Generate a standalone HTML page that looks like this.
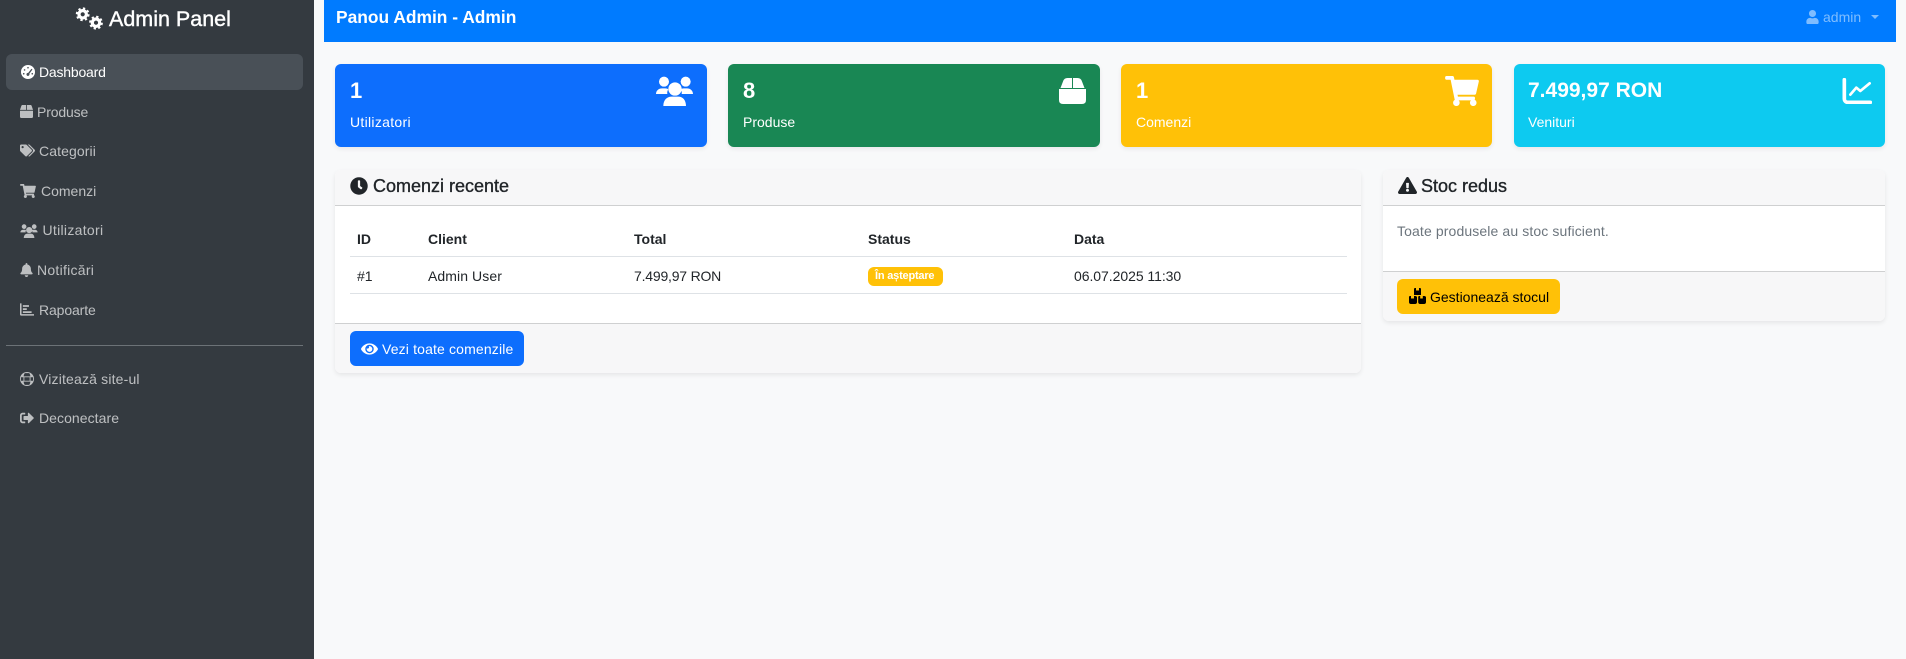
<!DOCTYPE html>
<html lang="ro">
<head>
<meta charset="utf-8">
<title>Admin Panel</title>
<style>
html,body{margin:0;padding:0;width:1906px;height:659px;overflow:hidden;background:#f8f9fa;font-family:"Liberation Sans",sans-serif;color:#212529}
.a{position:absolute}
.t{position:absolute;white-space:nowrap;line-height:20px;font-size:14px}
svg{position:absolute;display:block;fill:currentColor}
#side{left:0;top:0;width:314px;height:659px;background:#343a40}
.n{color:rgba(255,255,255,.68)}
.ni{color:rgba(255,255,255,.68)}
.card{position:absolute;border-radius:6px;background:#fff;box-shadow:0 2px 5px rgba(0,0,0,.08);overflow:hidden}
.st{position:absolute;top:64px;height:83px;border-radius:6px;box-shadow:0 2px 5px rgba(0,0,0,.07)}
.w{color:#fff}
.big{font-size:23px;font-weight:bold;line-height:28px;color:#fff}
.head{font-size:18px;-webkit-text-stroke:.35px currentColor}
.th{font-weight:bold;font-size:14px}
</style>
</head>
<body>
<div id="side" class="a"></div>
<svg style="left:73px;top:5px;width:32px;height:27px" viewBox="0 0 32 27"><g fill="none" stroke="#fff"><circle cx="9.7" cy="9.3" r="3.7" stroke-width="3.2"/><circle cx="9.7" cy="9.3" r="5.9" stroke-width="2" stroke-dasharray="2.3 2.33"/><circle cx="23" cy="17.7" r="3.7" stroke-width="3.2"/><circle cx="23" cy="17.7" r="5.9" stroke-width="2" stroke-dasharray="2.3 2.33"/></g></svg>
<div class="t" style="left:109px;top:9px;font-size:21.5px;color:#fff;-webkit-text-stroke:.4px #fff">Admin Panel</div>

<div class="a" style="left:6px;top:54px;width:297px;height:36px;background:#495057;border-radius:6px"></div>
<svg style="left:20.5px;top:65px;width:14px;height:14px;color:#fff" viewBox="0 0 512 512"><path fill-rule="evenodd" d="M256 0a256 256 0 1 0 0 512A256 256 0 1 0 256 0zM256 70a30 30 0 1 1 0 60 30 30 0 0 1 0-60zM130 150a30 30 0 1 1 0 60 30 30 0 0 1 0-60zM100 290a30 30 0 1 1 0 60 30 30 0 0 1 0-60zM412 290a30 30 0 1 1 0 60 30 30 0 0 1 0-60zM383 139l36 26-114 154a56 56 0 1 1-40-30z"/></svg>
<div class="t" style="left:39px;top:62px;color:#fff;letter-spacing:-.2px">Dashboard</div>

<svg class="ni" style="left:20px;top:105px;width:13px;height:13px" viewBox="0 0 512 512"><path d="M509.5 184.6L458.9 32.8C452.4 13.2 434.1 0 413.4 0H272v192h238.7c-.4-2.5-.4-5-1.2-7.4zM240 0H98.6c-20.7 0-39 13.2-45.5 32.8L2.5 184.6c-.8 2.4-.8 4.9-1.2 7.4H240V0zM0 224v240c0 26.5 21.5 48 48 48h416c26.5 0 48-21.5 48-48V224H0z"/></svg>
<div class="t n" style="left:37px;top:102px;letter-spacing:-.15px">Produse</div>

<svg class="ni" style="left:20px;top:144px;width:15px;height:13px" viewBox="0 0 640 512"><path d="M497.941 225.941L286.059 14.059A48 48 0 0 0 252.118 0H48C21.49 0 0 21.49 0 48v204.118a48 48 0 0 0 14.059 33.941l211.882 211.882c18.744 18.745 49.136 18.746 67.882 0l204.118-204.118c18.745-18.745 18.745-49.137 0-67.882zM112 160c-26.51 0-48-21.49-48-48s21.49-48 48-48 48 21.49 48 48-21.49 48-48 48zm513.941 133.823L421.823 497.941c-18.745 18.745-49.137 18.745-67.882 0l-.36-.36L527.64 323.522c16.999-16.999 26.36-39.6 26.36-63.64s-9.362-46.641-26.36-63.64L331.397 0h48.721a48 48 0 0 1 33.941 14.059l211.882 211.882c18.745 18.745 18.745 49.137 0 67.882z"/></svg>
<div class="t n" style="left:39px;top:141px;letter-spacing:.1px">Categorii</div>

<svg class="ni" style="left:20px;top:184px;width:16px;height:14px" viewBox="0 0 576 512"><path d="M528.12 301.319l47.273-208C578.806 78.301 567.391 64 551.99 64H159.208l-9.166-44.81C147.758 8.021 137.93 0 126.529 0H24C10.745 0 0 10.745 0 24v16c0 13.255 10.745 24 24 24h69.883l70.248 343.435C147.325 417.1 136 435.222 136 456c0 30.928 25.072 56 56 56s56-25.072 56-56c0-15.674-6.447-29.835-16.824-40h209.647C430.447 426.165 424 440.326 424 456c0 30.928 25.072 56 56 56s56-25.072 56-56c0-22.172-12.888-41.332-31.579-50.405l5.517-24.276c3.413-15.018-8.002-29.319-23.403-29.319H218.117l-6.545-32h293.145c11.206 0 20.92-7.754 23.403-18.681z"/></svg>
<div class="t n" style="left:41px;top:181px">Comenzi</div>

<svg class="ni" style="left:20px;top:224px;width:18px;height:14px" viewBox="1008 228 111 90"><circle cx="1032" cy="245" r="15"/><circle cx="1097" cy="245" r="15"/><circle cx="1065" cy="267" r="20"/><path d="M1030 318c0-18 11-28 25-28h20c13 0 23 10 23 28zM1008 282c0-10 8-17 18-17h10c4 0 7 1 9 3-3 4-4 9-3 14zM1119 282c0-10-8-17-18-17h-10c-4 0-7 1-9 3 3 4 4 9 3 14z"/></svg>
<div class="t n" style="left:42.5px;top:220px;letter-spacing:.3px">Utilizatori</div>

<svg class="ni" style="left:20px;top:263px;width:13px;height:14px" viewBox="0 0 448 512"><path d="M224 512c35.32 0 63.97-28.65 63.97-64H160.03c0 35.35 28.65 64 63.97 64zm215.39-149.71c-19.32-20.76-55.47-51.99-55.47-154.29 0-77.7-54.48-139.9-127.94-155.16V32c0-17.67-14.32-32-31.98-32s-31.98 14.33-31.98 32v20.84C118.56 68.1 64.08 130.3 64.08 208c0 102.3-36.15 133.53-55.47 154.29-6 6.45-8.66 14.16-8.61 21.71.11 16.4 12.98 32 32.1 32h383.8c19.12 0 32-15.6 32.1-32 .05-7.55-2.61-15.27-8.61-21.71z"/></svg>
<div class="t n" style="left:37px;top:260px;letter-spacing:.27px">Notificări</div>

<svg class="ni" style="left:20px;top:303px;width:14px;height:13px" viewBox="0 0 512 448"><path d="M56 0H0v400c0 26 22 48 48 48h464v-56H56zM104 64h224v64H104zM104 176h144v64H104zM104 288h320v64H104z"/></svg>
<div class="t n" style="left:39px;top:300px;letter-spacing:-.12px">Rapoarte</div>

<div class="a" style="left:6px;top:345px;width:297px;height:1px;background:#6c7277"></div>

<svg class="ni" style="left:20px;top:372px;width:14px;height:14px" viewBox="0 0 512 512"><path fill-rule="evenodd" d="M256 0a256 256 0 1 0 0 512A256 256 0 1 0 256 0zM176 40c-22 28-38 70-44 120h248c-6-50-22-92-44-120zM36 192c-3 20-3 108 0 128h92c-2-40-2-88 0-128zM160 192c-2 40-2 88 0 128h192c2-40 2-88 0-128zM384 192c2 40 2 88 0 128h92c3-20 3-108 0-128zM132 352c6 50 22 92 44 120h160c22-28 38-70 44-120z"/></svg>
<div class="t n" style="left:39px;top:369px;letter-spacing:.17px">Vizitează site-ul</div>

<svg class="ni" style="left:20px;top:411px;width:14px;height:14px" viewBox="0 0 512 512"><path d="M497 273L329 441c-15 15-41 4.5-41-17v-96H152c-13.3 0-24-10.7-24-24v-96c0-13.3 10.7-24 24-24h136V88c0-21.4 25.9-32 41-17l168 168c9.3 9.4 9.3 24.6 0 34zM192 436v-40c0-6.6-5.4-12-12-12H96c-17.7 0-32-14.3-32-32V160c0-17.7 14.3-32 32-32h84c6.6 0 12-5.4 12-12V76c0-6.6-5.4-12-12-12H96c-53 0-96 43-96 96v192c0 53 43 96 96 96h84c6.6 0 12-5.4 12-12z"/></svg>
<div class="t n" style="left:39px;top:408px;letter-spacing:.06px">Deconectare</div>

<div class="a" style="left:324px;top:0;width:1572px;height:42px;background:#007bff"></div>
<div class="t" style="left:336px;top:7px;font-size:17.4px;font-weight:bold;color:#fff">Panou Admin - Admin</div>
<svg style="left:1806px;top:10px;width:13px;height:14px;color:#7fbdff" viewBox="0 0 448 512"><path d="M224 256c70.7 0 128-57.3 128-128S294.7 0 224 0 96 57.3 96 128s57.3 128 128 128zm89.6 32h-16.7c-22.2 10.2-46.9 16-72.9 16s-50.6-5.8-72.9-16h-16.7C60.2 288 0 348.2 0 422.4V464c0 26.5 21.5 48 48 48h352c26.5 0 48-21.5 48-48v-41.6c0-74.2-60.2-134.4-134.4-134.4z"/></svg>
<div class="t" style="left:1823px;top:7px;color:#7fbdff">admin</div>
<div class="a" style="left:1871px;top:15px;width:0;height:0;border-top:4px solid #7fbdff;border-left:4px solid transparent;border-right:4px solid transparent"></div>

<div class="st" style="left:335px;width:372px;background:#0d6efd"></div>
<div class="t big" style="left:350px;top:77px;font-size:22px">1</div>
<div class="t w" style="left:350px;top:112px;letter-spacing:.3px">Utilizatori</div>
<svg class="w" style="left:656px;top:76px;width:37px;height:30px" viewBox="1008 228 111 90"><circle cx="1032" cy="245" r="15"/><circle cx="1097" cy="245" r="15"/><circle cx="1065" cy="267" r="20"/><path d="M1030 318c0-18 11-28 25-28h20c13 0 23 10 23 28zM1008 282c0-10 8-17 18-17h10c4 0 7 1 9 3-3 4-4 9-3 14zM1119 282c0-10-8-17-18-17h-10c-4 0-7 1-9 3 3 4 4 9 3 14z"/></svg>

<div class="st" style="left:728px;width:372px;background:#198754"></div>
<div class="t big" style="left:743px;top:77px;font-size:22px">8</div>
<div class="t w" style="left:743px;top:112px">Produse</div>
<svg class="w" style="left:1059px;top:78px;width:27px;height:26px" viewBox="0 0 27 26"><path d="M1.5 10 L4 3.5 Q5 0 8.5 0 H13 V10 Z M14 0 H18.5 Q22 0 23 3.5 L25.5 10 H14 Z M0 11 H27 V22 Q27 26 23 26 H4 Q0 26 0 22 Z"/></svg>

<div class="st" style="left:1121px;width:371px;background:#ffc107"></div>
<div class="t big" style="left:1136px;top:77px;font-size:22px">1</div>
<div class="t w" style="left:1136px;top:112px">Comenzi</div>
<svg class="w" style="left:1445px;top:76px;width:34px;height:30px" viewBox="0 0 576 512"><path d="M528.12 301.319l47.273-208C578.806 78.301 567.391 64 551.99 64H159.208l-9.166-44.81C147.758 8.021 137.93 0 126.529 0H24C10.745 0 0 10.745 0 24v16c0 13.255 10.745 24 24 24h69.883l70.248 343.435C147.325 417.1 136 435.222 136 456c0 30.928 25.072 56 56 56s56-25.072 56-56c0-15.674-6.447-29.835-16.824-40h209.647C430.447 426.165 424 440.326 424 456c0 30.928 25.072 56 56 56s56-25.072 56-56c0-22.172-12.888-41.332-31.579-50.405l5.517-24.276c3.413-15.018-8.002-29.319-23.403-29.319H218.117l-6.545-32h293.145c11.206 0 20.92-7.754 23.403-18.681z"/></svg>

<div class="st" style="left:1514px;width:371px;background:#0dcaf0"></div>
<div class="t big" style="left:1528px;top:77px;font-size:21px">7.499,97 RON</div>
<div class="t w" style="left:1528px;top:112px">Venituri</div>
<svg class="w" style="left:1841.7px;top:77.7px;width:30.67px;height:26.67px" viewBox="1025 233 92 80"><path fill="none" stroke="#fff" stroke-width="11" stroke-linecap="round" d="M1032 238V296a10 10 0 0 0 10 10H1110"/><path fill="none" stroke="#fff" stroke-width="8" stroke-linecap="round" stroke-linejoin="round" d="M1050 283L1068 262L1080 272L1108 249"/></svg>

<div class="card" style="left:335px;top:170px;width:1026px;height:203px">
  <div class="a" style="left:0;top:0;width:100%;height:35px;background:#f7f7f8;border-bottom:1px solid #cfd0d1"></div>
  <div class="a" style="left:0;top:153px;width:100%;height:50px;background:#f7f7f8;border-top:1px solid #cfd0d1;box-sizing:border-box"></div>
</div>
<svg style="left:350px;top:177px;width:18px;height:18px;color:#212529" viewBox="0 0 512 512"><path d="M256,8C119,8,8,119,8,256S119,504,256,504,504,393,504,256,393,8,256,8Zm92.49,313h0l-20,25a16,16,0,0,1-22.49,2.5h0l-67-49.72a40,40,0,0,1-15-31.23V112a16,16,0,0,1,16-16h32a16,16,0,0,1,16,16V256l58,42.5A16,16,0,0,1,348.49,321Z"/></svg>
<div class="t head" style="left:373px;top:176px">Comenzi recente</div>

<div class="t th" style="left:357px;top:229px">ID</div>
<div class="t th" style="left:428px;top:229px">Client</div>
<div class="t th" style="left:634px;top:229px">Total</div>
<div class="t th" style="left:868px;top:229px">Status</div>
<div class="t th" style="left:1074px;top:229px">Data</div>
<div class="a" style="left:350px;top:256px;width:997px;height:1px;background:#dee2e6"></div>
<div class="t" style="left:357px;top:266px">#1</div>
<div class="t" style="left:428px;top:266px;letter-spacing:.08px">Admin User</div>
<div class="t" style="left:634px;top:266px;letter-spacing:-.2px">7.499,97 RON</div>
<div class="a" style="left:868px;top:267px;width:75px;height:19px;background:#ffc107;border-radius:6px"></div>
<div class="t" style="left:875px;top:267px;line-height:19px;font-size:11px;font-weight:bold;color:#fff;letter-spacing:-.2px">În așteptare</div>
<div class="t" style="left:1074px;top:266px;letter-spacing:-.05px">06.07.2025 11:30</div>
<div class="a" style="left:350px;top:293px;width:997px;height:1px;background:#dee2e6"></div>

<div class="a" style="left:350px;top:331px;width:174px;height:35px;background:#0d6efd;border-radius:6px"></div>
<svg class="w" style="left:361px;top:341px;width:17px;height:16px" viewBox="0 0 576 512"><path d="M572.52 241.4C518.29 135.59 410.93 64 288 64S57.68 135.64 3.48 241.41a32.35 32.35 0 0 0 0 29.19C57.71 376.41 165.07 448 288 448s230.32-71.64 284.52-177.41a32.35 32.35 0 0 0 0-29.19zM288 400a144 144 0 1 1 144-144 143.93 143.93 0 0 1-144 144zm0-240a95.31 95.31 0 0 0-25.31 3.79 47.85 47.85 0 0 1-66.9 66.9A95.78 95.78 0 1 0 288 160z"/></svg>
<div class="t w" style="left:382px;top:339px;font-size:14px;letter-spacing:.15px">Vezi toate comenzile</div>

<div class="card" style="left:1383px;top:170px;width:502px;height:151px">
  <div class="a" style="left:0;top:0;width:100%;height:35px;background:#f7f7f8;border-bottom:1px solid #cfd0d1"></div>
  <div class="a" style="left:0;top:101px;width:100%;height:50px;background:#f7f7f8;border-top:1px solid #cfd0d1;box-sizing:border-box"></div>
</div>
<svg style="left:1398px;top:177px;width:19px;height:17px;color:#212529" viewBox="0 0 576 512"><path d="M569.517 440.013C587.975 472.007 564.806 512 527.94 512H48.054c-36.937 0-59.999-40.055-41.577-71.987L246.423 23.985c18.467-32.009 64.72-31.951 83.154 0l239.94 416.028zM288 354c-25.405 0-46 20.595-46 46s20.595 46 46 46 46-20.595 46-46-20.595-46-46-46zm-43.673-165.346l7.418 136c.347 6.364 5.609 11.346 11.982 11.346h48.546c6.373 0 11.635-4.982 11.982-11.346l7.418-136c.375-6.874-5.098-12.654-11.982-12.654h-63.383c-6.884 0-12.356 5.78-11.981 12.654z"/></svg>
<div class="t head" style="left:1421px;top:176px">Stoc redus</div>
<div class="t" style="left:1397px;top:221px;color:#6c757d;letter-spacing:.12px">Toate produsele au stoc suficient.</div>

<div class="a" style="left:1397px;top:279px;width:163px;height:35px;background:#ffc107;border-radius:6px"></div>
<svg style="left:1409px;top:288px;width:17px;height:16px;color:#000" viewBox="0 0 17 16"><path d="M5 1a1 1 0 0 1 1-1h1v2.5h3V0h1a1 1 0 0 1 1 1v6H5zM0 9a1 1 0 0 1 1-1h1v2.5h3V8h1a2 2 0 0 1 2 1v5a2 2 0 0 1-2 2H2a2 2 0 0 1-2-2zM9.2 9a1 1 0 0 1 1-1h1v2.5h2.6V8H15a2 2 0 0 1 2 1v5a2 2 0 0 1-2 2h-3.800a2 2 0 0 1-2-2z"/></svg>
<div class="t" style="left:1430px;top:287px;color:#000">Gestionează stocul</div>
</body>
</html>
